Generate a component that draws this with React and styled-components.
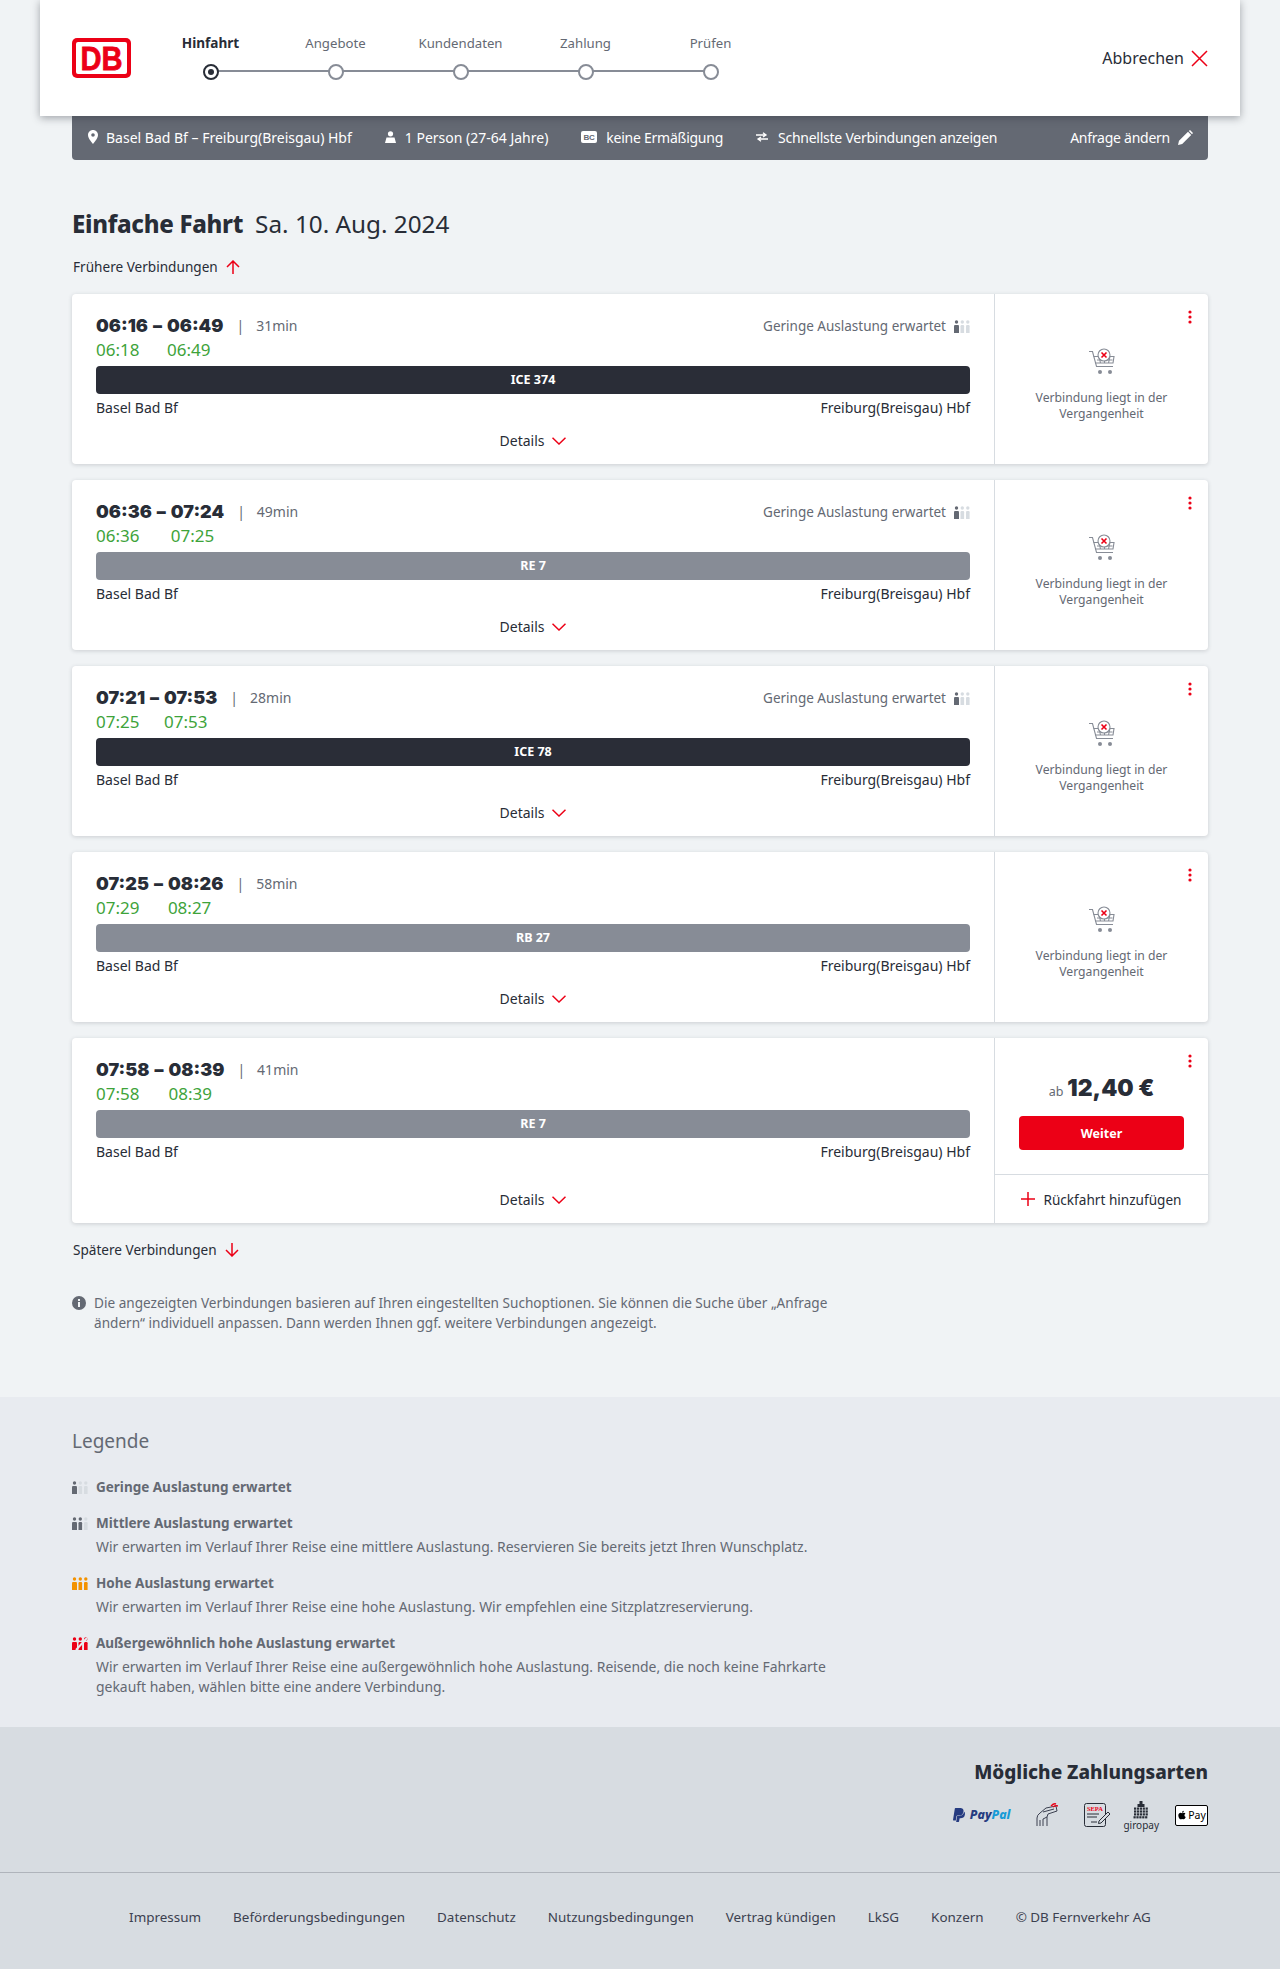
import React from 'react';
import styled, { createGlobalStyle } from 'styled-components';
import { FaApple, FaPaypal } from 'react-icons/fa';

const GlobalStyle = createGlobalStyle`
  html, body { margin: 0; padding: 0; background: #f0f3f5; }
  body { font-family: "Noto Sans", "Liberation Sans", sans-serif; color: #282d37; font-size: 14px; }
  * { box-sizing: border-box; }
`;

const connections = [
  { dep: '06:16', arr: '06:49', dur: '31min', depReal: '06:18', arrReal: '06:49', train: 'ICE 374', dark: true, load: true },
  { dep: '06:36', arr: '07:24', dur: '49min', depReal: '06:36', arrReal: '07:25', train: 'RE 7', load: true },
  { dep: '07:21', arr: '07:53', dur: '28min', depReal: '07:25', arrReal: '07:53', train: 'ICE 78', dark: true, load: true },
  { dep: '07:25', arr: '08:26', dur: '58min', depReal: '07:29', arrReal: '08:27', train: 'RB 27' },
  { dep: '07:58', arr: '08:39', dur: '41min', depReal: '07:58', arrReal: '08:39', train: 'RE 7', bookable: true },
];

const steps = ['Hinfahrt', 'Angebote', 'Kundendaten', 'Zahlung', 'Prüfen'];

const legend = [
  { level: 1, color: '#646973', title: 'Geringe Auslastung erwartet' },
  { level: 2, color: '#646973', title: 'Mittlere Auslastung erwartet', text: 'Wir erwarten im Verlauf Ihrer Reise eine mittlere Auslastung. Reservieren Sie bereits jetzt Ihren Wunschplatz.' },
  { level: 3, color: '#f39200', title: 'Hohe Auslastung erwartet', text: 'Wir erwarten im Verlauf Ihrer Reise eine hohe Auslastung. Wir empfehlen eine Sitzplatzreservierung.' },
  { level: 4, color: '#ec0016', title: 'Außergewöhnlich hohe Auslastung erwartet', text: 'Wir erwarten im Verlauf Ihrer Reise eine außergewöhnlich hohe Auslastung. Reisende, die noch keine Fahrkarte gekauft haben, wählen bitte eine andere Verbindung.' },
];

const footerLinks = ['Impressum', 'Beförderungsbedingungen', 'Datenschutz', 'Nutzungsbedingungen', 'Vertrag kündigen', 'LkSG', 'Konzern', '© DB Fernverkehr AG'];

function DbLogo() {
  return (
    <svg width="59" height="40" viewBox="0 0 59 40">
      <rect width="59" height="40" rx="5" fill="#ec0016" />
      <rect x="4" y="4" width="51" height="32" rx="2" fill="#fff" />
      <text x="29.5" y="31.5" textAnchor="middle" fill="#ec0016" stroke="#ec0016" strokeWidth="0.8" fontFamily="'Liberation Sans', sans-serif" fontWeight="700" fontSize="34" textLength="42" lengthAdjust="spacingAndGlyphs">DB</text>
    </svg>
  );
}

function LoadIcon({ level, color }) {
  const figures = [0, 6.5, 12];
  const pale = '#d7dce1';
  return (
    <svg width="16" height="13" viewBox="0 0 16 13">
      {figures.map((x, i) => {
        const on = i < level;
        const w = i === 0 ? 5 : 3.6;
        return (
          <g key={x} fill={on ? color : pale}>
            <circle cx={x + w / 2} cy="2" r="1.7" />
            <path d={`M${x} 6.2 Q${x} 5 ${x + 1} 5 H${x + w - 1} Q${x + w} 5 ${x + w} 6.2 V13 H${x} Z`} />
          </g>
        );
      })}
      {level === 4 && <path d="M4 13 L15 1" stroke="#e8ebf0" strokeWidth="2" />}
    </svg>
  );
}

function CartIcon() {
  return (
    <svg width="28" height="28" viewBox="0 0 28 28" fill="none" stroke="#878c96" strokeWidth="1.1">
      <path d="M1 3.5 H4.5 L8.5 18.5 H25" />
      <path d="M5.5 8.5 H11 M20 8.5 H26 L25 15 H7.2 M9 12 H24.5 M11 8.5 L12.5 15 M22 8.5 L20.5 15 M16.5 12 V15" />
      <circle cx="16" cy="7" r="6" fill="#fff" />
      <path d="M13.5 4.5 L18.5 9.5 M18.5 4.5 L13.5 9.5" stroke="#ec0016" strokeWidth="1.6" />
      <circle cx="12" cy="24" r="2" fill="#878c96" stroke="none" />
      <circle cx="22" cy="24" r="2" fill="#878c96" stroke="none" />
    </svg>
  );
}

function MoreDots() {
  return (
    <svg width="4" height="14" viewBox="0 0 4 14" fill="#ec0016">
      <circle cx="2" cy="2" r="1.6" />
      <circle cx="2" cy="7" r="1.6" />
      <circle cx="2" cy="12" r="1.6" />
    </svg>
  );
}

function Chevron() {
  return (
    <svg width="14" height="8" viewBox="0 0 14 8" fill="none" stroke="#ec0016" strokeWidth="1.5">
      <path d="M0.5 0.8 L7 7 L13.5 0.8" />
    </svg>
  );
}

function Arrow({ up }) {
  return (
    <svg width="14" height="14" viewBox="0 0 14 14" fill="none" stroke="#ec0016" strokeWidth="1.5">
      {up ? <path d="M7 14 V1 M1 7 L7 1 L13 7" /> : <path d="M7 0 V13 M1 7 L7 13 L13 7" />}
    </svg>
  );
}

function HandCardIcon() {
  return (
    <svg width="22" height="24" viewBox="0 0 22 24" fill="none" stroke="#3c4150" strokeWidth="1">
      <path d="M1 23 V15 Q1 12 4 10 L10 5 L20 3 L21 8 L12 11 L11 14 L7 16 V23" />
      <path d="M7 9 L18 6 M4 23 V17 M11 14 V23" />
      <path d="M15 3 Q18 0 20 1 M17 4 Q20 2 22 3" stroke="#ec0016" strokeWidth="1.4" />
    </svg>
  );
}

function SepaIcon() {
  return (
    <svg width="26" height="24" viewBox="0 0 26 24" fill="none" stroke="#282d37" strokeWidth="1">
      <rect x="0.5" y="0.5" width="21" height="23" rx="2" />
      <text x="11" y="8" textAnchor="middle" fill="#ec0016" stroke="none" fontSize="6.5" fontWeight="700" fontFamily="'Liberation Serif', serif">SEPA</text>
      <path d="M3 11 H15 M3 14 H13 M7 19 H13" />
      <path d="M15 18 L24 9 L26 11 L17 20 L14.5 20.5 Z" fill="#d7dce1" />
    </svg>
  );
}

function GiroIcon() {
  const cols = [0, 1, 2, 3, 4];
  return (
    <svg width="16" height="18" viewBox="0 0 16 18" fill="#282d37">
      <rect x="6.5" y="0" width="3" height="4" />
      <rect x="4.5" y="3" width="7" height="3" />
      {cols.map(c => [0, 1, 2, 3].map(r => (
        <rect key={`${c}-${r}`} x={1 + c * 2.9 - (r === 3 ? 0.5 : 0)} y={6.5 + r * 2.9} width="2.2" height="2.2" />
      )))}
    </svg>
  );
}

const Page = styled.div`
  width: 1280px;
`;

const Header = styled.header`
  position: relative;
  z-index: 2;
  margin: 0 40px;
  height: 116px;
  padding: 0 32px;
  background: #fff;
  box-shadow: 0 2px 8px rgba(40, 45, 55, 0.4);
  display: flex;
  align-items: center;
  justify-content: space-between;
`;

const HeaderLeft = styled.div`
  display: flex;
  align-items: center;
`;

const Stepper = styled.div`
  display: flex;
  margin-left: 17px;
  margin-top: -3px;
`;

const Step = styled.div`
  position: relative;
  width: 125px;
  display: flex;
  flex-direction: column;
  align-items: center;
  gap: 11px;
  &:not(:last-child)::after {
    content: '';
    position: absolute;
    left: 50%;
    width: 100%;
    top: 37px;
    height: 2px;
    background: #878c96;
  }
`;

const StepLabel = styled.span`
  font-size: ${p => (p.$active ? 13.6 : 13.2)}px;
  line-height: 20px;
  font-weight: ${p => (p.$active ? 700 : 400)};
  color: ${p => (p.$active ? '#282d37' : '#646973')};
`;

const StepDot = styled.span`
  position: relative;
  z-index: 1;
  width: 16px;
  height: 16px;
  border-radius: 50%;
  background: #fff;
  border: 2px solid ${p => (p.$active ? '#282d37' : '#878c96')};
  display: flex;
  align-items: center;
  justify-content: center;
  &::before {
    content: '';
    width: 6px;
    height: 6px;
    border-radius: 50%;
    background: ${p => (p.$active ? '#282d37' : 'transparent')};
  }
`;

const Cancel = styled.div`
  display: flex;
  align-items: center;
  gap: 7px;
  font-size: 16px;
  color: #282d37;
`;

const Main = styled.main`
  padding: 0 72px 64px;
`;

const SummaryBar = styled.div`
  height: 44px;
  padding: 0 15px 2px 16px;
  background: #646973;
  color: #fff;
  border-radius: 0 0 4px 4px;
  display: flex;
  align-items: center;
  gap: 33px;
  font-size: 14px;
`;

const SummaryItem = styled.div`
  display: flex;
  align-items: center;
  gap: ${p => p.$gap || 8}px;
  white-space: nowrap;
  margin-left: ${p => (p.$end ? 'auto' : '0')};
  letter-spacing: ${p => (p.$tight ? '-0.25px' : '0')};
`;

const Heading = styled.div`
  margin-top: 48px;
  display: flex;
  align-items: baseline;
  gap: 12px;
  line-height: 32px;
`;

const HeadingBold = styled.h1`
  margin: 0;
  font-size: 24px;
  font-weight: 800;
  letter-spacing: -0.3px;
`;

const HeadingDate = styled.span`
  font-size: 24.3px;
`;

const PageLink = styled.div`
  margin-top: 17px;
  margin-left: 1px;
  display: flex;
  align-items: center;
  gap: 8px;
  font-size: 13.6px;
  line-height: 20px;
`;

const Cards = styled.div`
  margin-top: 17px;
  display: flex;
  flex-direction: column;
  gap: 16px;
`;

const Card = styled.section`
  display: grid;
  grid-template-columns: 922px 214px;
  background: #fff;
  border-radius: 4px;
  box-shadow: 0 1px 4px rgba(40, 45, 55, 0.18);
`;

const CardMain = styled.div`
  padding: 22px 24px 13px;
  display: flex;
  flex-direction: column;
`;

const TopRow = styled.div`
  display: flex;
  justify-content: space-between;
  align-items: flex-start;
`;

const TimeGrid = styled.div`
  display: inline-grid;
  grid-template-columns: max-content max-content max-content max-content max-content;
  align-items: center;
`;

const TimeBold = styled.span`
  font-family: Inter, "Noto Sans", sans-serif;
  font-size: 18px;
  font-weight: 900;
  line-height: 20px;
`;

const TimeDash = styled(TimeBold)`
  padding: 0 5px;
`;

const Pipe = styled.span`
  color: #646973;
  font-size: 14px;
  line-height: 20px;
  padding: 0 12px 0 13px;
`;

const Duration = styled.span`
  color: #646973;
  font-size: 14px;
  line-height: 20px;
`;

const TimeReal = styled.span`
  grid-row: 2;
  grid-column: ${p => p.$col};
  margin-top: 2px;
  color: #3ea33a;
  font-size: 17px;
  line-height: 24px;
`;

const LoadNote = styled.div`
  display: flex;
  align-items: center;
  gap: 8px;
  color: #646973;
  font-size: 13.5px;
  line-height: 20px;
`;

const TrainBar = styled.div`
  margin-top: 4px;
  height: 28px;
  padding-bottom: 2px;
  border-radius: 4px;
  background: ${p => (p.$dark ? '#2a2d37' : '#878c96')};
  color: #fff;
  font-size: 12.5px;
  font-weight: 700;
  display: flex;
  align-items: center;
  justify-content: center;
`;

const Stations = styled.div`
  margin-top: 4px;
  display: flex;
  justify-content: space-between;
  font-size: 14px;
  line-height: 20px;
`;

const DetailsRow = styled.div`
  margin-top: auto;
  padding-top: 13px;
  display: flex;
  align-items: center;
  justify-content: center;
  gap: 8px;
  font-size: 14px;
  line-height: 20px;
`;

const CardSide = styled.div`
  position: relative;
  border-left: 1px solid #d7dce1;
  display: flex;
  flex-direction: column;
`;

const MoreButton = styled.div`
  position: absolute;
  top: 16px;
  right: 16px;
  line-height: 0;
`;

const PastNote = styled.div`
  padding: 54px 24px 0;
  display: flex;
  flex-direction: column;
  align-items: center;
  gap: 14px;
  text-align: center;
  color: #646973;
  font-size: 12.2px;
`;

const PastText = styled.p`
  margin: 0;
  line-height: 16px;
`;

const Offer = styled.div`
  height: 136px;
  padding: 35px 24px 0;
`;

const Price = styled.div`
  height: 30px;
  display: flex;
  justify-content: center;
  align-items: baseline;
  gap: 4px;
  line-height: 30px;
`;

const PriceFrom = styled.span`
  color: #646973;
  font-size: 12.5px;
`;

const PriceValue = styled.span`
  font-family: Inter, "Noto Sans", sans-serif;
  font-size: 23px;
  font-weight: 900;
`;

const ContinueButton = styled.button`
  display: block;
  margin-top: 13px;
  width: 165px;
  height: 34px;
  border: 0;
  border-radius: 4px;
  background: #ec0016;
  color: #fff;
  font-family: inherit;
  font-size: 12.5px;
  font-weight: 700;
`;

const ReturnRow = styled.div`
  height: 49px;
  border-top: 1px solid #d7dce1;
  display: flex;
  align-items: center;
  justify-content: center;
  gap: 8px;
  font-size: 13.6px;
`;

const InfoBox = styled.div`
  margin-top: 33px;
  width: 790px;
  display: grid;
  grid-template-columns: 22px 1fr;
  color: #646973;
  font-size: 13.6px;
  line-height: 20px;
`;

const InfoIcon = styled.span`
  padding-top: 3px;
  line-height: 0;
`;

const LegendSection = styled.section`
  background: #e8ebf0;
  padding: 31px 72px 30px;
  color: #646973;
`;

const LegendTitle = styled.h2`
  margin: 0 0 23px;
  font-size: 19px;
  font-weight: 400;
  line-height: 26px;
`;

const LegendList = styled.div`
  display: flex;
  flex-direction: column;
  gap: 16px;
  width: 780px;
`;

const LegendItem = styled.div`
  display: grid;
  grid-template-columns: 24px 1fr;
  row-gap: 4px;
  align-items: center;
`;

const LegendName = styled.strong`
  font-size: 13.5px;
  line-height: 20px;
  font-weight: 700;
`;

const LegendText = styled.p`
  grid-column: 2;
  margin: 0;
  font-size: 13.95px;
  line-height: 20px;
`;

const IconCell = styled.span`
  line-height: 0;
`;

const PaymentSection = styled.section`
  background: #d7dce1;
  padding: 31px 72px 42px;
  border-bottom: 1px solid #afb4bb;
`;

const PaymentTitle = styled.h2`
  margin: 0;
  text-align: right;
  font-size: 19px;
  font-weight: 800;
  line-height: 28px;
`;

const PaymentRow = styled.div`
  margin-top: 14px;
  height: 30px;
  display: flex;
  justify-content: flex-end;
  align-items: center;
`;

const PaymentIcon = styled.div`
  margin-left: ${p => p.$gap}px;
  display: flex;
  flex-direction: ${p => (p.$stack ? 'column' : 'row')};
  align-items: center;
  line-height: 1;
`;

const PayPalWord = styled.span`
  margin-left: 3px;
  font-size: 12.4px;
  font-weight: 800;
  font-style: italic;
  color: #253b80;
`;

const PayPalPal = styled.span`
  color: #179bd7;
`;

const GiroWord = styled.span`
  font-size: 10px;
  color: #282d37;
  margin-top: 1px;
`;

const ApplePay = styled.div`
  width: 33px;
  height: 21px;
  background: #fff;
  border: 1px solid #000;
  border-radius: 2px;
  color: #000;
  font-size: 10.5px;
  display: flex;
  align-items: center;
  justify-content: center;
  gap: 1px;
`;

const Footer = styled.footer`
  background: #d7dce1;
  height: 96px;
  padding-bottom: 8px;
  display: flex;
  align-items: center;
  justify-content: center;
  gap: 32px;
  font-size: 13.45px;
  color: #3c4150;
`;

function ConnectionCard({ c }) {
  return (
    <Card>
      <CardMain>
        <TopRow>
          <TimeGrid>
            <TimeBold>{c.dep}</TimeBold>
            <TimeDash>–</TimeDash>
            <TimeBold>{c.arr}</TimeBold>
            <Pipe>|</Pipe>
            <Duration>{c.dur}</Duration>
            <TimeReal $col={1}>{c.depReal}</TimeReal>
            <TimeReal $col={3}>{c.arrReal}</TimeReal>
          </TimeGrid>
          {c.load && (
            <LoadNote>
              Geringe Auslastung erwartet
              <LoadIcon level={1} color="#646973" />
            </LoadNote>
          )}
        </TopRow>
        <TrainBar $dark={c.dark}>{c.train}</TrainBar>
        <Stations>
          <span>Basel Bad Bf</span>
          <span>Freiburg(Breisgau) Hbf</span>
        </Stations>
        <DetailsRow>
          Details
          <Chevron />
        </DetailsRow>
      </CardMain>
      <CardSide>
        <MoreButton><MoreDots /></MoreButton>
        {c.bookable ? (
          <>
            <Offer>
              <Price>
                <PriceFrom>ab</PriceFrom>
                <PriceValue>12,40 €</PriceValue>
              </Price>
              <ContinueButton>Weiter</ContinueButton>
            </Offer>
            <ReturnRow>
              <svg width="14" height="14" viewBox="0 0 14 14" stroke="#ec0016" strokeWidth="1.5">
                <path d="M7 0 V14 M0 7 H14" />
              </svg>
              Rückfahrt hinzufügen
            </ReturnRow>
          </>
        ) : (
          <PastNote>
            <CartIcon />
            <PastText>Verbindung liegt in der Vergangenheit</PastText>
          </PastNote>
        )}
      </CardSide>
    </Card>
  );
}

export default function App() {
  return (
    <Page>
      <GlobalStyle />
      <Header>
        <HeaderLeft>
          <DbLogo />
          <Stepper>
            {steps.map((s, i) => (
              <Step key={s}>
                <StepLabel $active={i === 0}>{s}</StepLabel>
                <StepDot $active={i === 0} />
              </Step>
            ))}
          </Stepper>
        </HeaderLeft>
        <Cancel>
          Abbrechen
          <svg width="17" height="17" viewBox="0 0 17 17" stroke="#ec0016" strokeWidth="1.5">
            <path d="M1 1 L16 16 M16 1 L1 16" />
          </svg>
        </Cancel>
      </Header>
      <Main>
        <SummaryBar>
          <SummaryItem>
            <svg width="10" height="14" viewBox="0 0 10 14" fill="#fff">
              <path fillRule="evenodd" d="M5 0 C2.2 0 0 2.2 0 5 C0 8.5 5 14 5 14 C5 14 10 8.5 10 5 C10 2.2 7.8 0 5 0 Z M5 3.2 A1.8 1.8 0 1 1 5 6.8 A1.8 1.8 0 1 1 5 3.2 Z" />
            </svg>
            Basel Bad Bf – Freiburg(Breisgau) Hbf
          </SummaryItem>
          <SummaryItem $gap={9}>
            <svg width="11" height="12" viewBox="0 0 11 12" fill="#fff">
              <circle cx="5.5" cy="2.8" r="2.6" />
              <path d="M1.5 6.5 H9.5 L11 12 H0 Z" />
            </svg>
            1 Person (27-64 Jahre)
          </SummaryItem>
          <SummaryItem $gap={9} $tight>
            <svg width="16" height="12" viewBox="0 0 16 12">
              <rect width="16" height="12" rx="2" fill="#fff" />
              <text x="8" y="9" textAnchor="middle" fontSize="8" fontWeight="700" fill="#646973" fontFamily="'Liberation Sans', sans-serif">BC</text>
            </svg>
            keine Ermäßigung
          </SummaryItem>
          <SummaryItem $gap={10} $tight>
            <svg width="12" height="10" viewBox="0 0 12 10" fill="none" stroke="#fff" strokeWidth="1.3">
              <path d="M0 3 H9 M7 0.8 L10 3 L7 5 M12 7 H3 M5 5 L2 7 L5 9.2" />
            </svg>
            Schnellste Verbindungen anzeigen
          </SummaryItem>
          <SummaryItem $end $tight>
            Anfrage ändern
            <svg width="15" height="15" viewBox="0 0 15 15" fill="#fff">
              <path d="M0 15 L1 10.8 L10 1.8 L13.2 5 L4.2 14 Z M10.8 1 L12 0 L15 3 L14 4.2 Z" />
            </svg>
          </SummaryItem>
        </SummaryBar>
        <Heading>
          <HeadingBold>Einfache Fahrt</HeadingBold>
          <HeadingDate>Sa. 10. Aug. 2024</HeadingDate>
        </Heading>
        <PageLink>
          Frühere Verbindungen
          <Arrow up />
        </PageLink>
        <Cards>
          {connections.map(c => <ConnectionCard key={c.dep} c={c} />)}
        </Cards>
        <PageLink>
          Spätere Verbindungen
          <Arrow />
        </PageLink>
        <InfoBox>
          <InfoIcon>
            <svg width="14" height="14" viewBox="0 0 14 14">
              <circle cx="7" cy="7" r="7" fill="#646973" />
              <rect x="6" y="6" width="2" height="5" fill="#f0f3f5" />
              <rect x="6" y="3" width="2" height="2" fill="#f0f3f5" />
            </svg>
          </InfoIcon>
          <span>Die angezeigten Verbindungen basieren auf Ihren eingestellten Suchoptionen. Sie können die Suche über „Anfrage ändern“ individuell anpassen. Dann werden Ihnen ggf. weitere Verbindungen angezeigt.</span>
        </InfoBox>
      </Main>
      <LegendSection>
        <LegendTitle>Legende</LegendTitle>
        <LegendList>
          {legend.map(l => (
            <LegendItem key={l.title}>
              <IconCell><LoadIcon level={l.level} color={l.color} /></IconCell>
              <LegendName>{l.title}</LegendName>
              {l.text && <LegendText>{l.text}</LegendText>}
            </LegendItem>
          ))}
        </LegendList>
      </LegendSection>
      <PaymentSection>
        <PaymentTitle>Mögliche Zahlungsarten</PaymentTitle>
        <PaymentRow>
          <PaymentIcon $gap={0}>
            <FaPaypal size={16} color="#253b80" />
            <PayPalWord>Pay<PayPalPal>Pal</PayPalPal></PayPalWord>
          </PaymentIcon>
          <PaymentIcon $gap={26}><HandCardIcon /></PaymentIcon>
          <PaymentIcon $gap={26}><SepaIcon /></PaymentIcon>
          <PaymentIcon $gap={13} $stack>
            <GiroIcon />
            <GiroWord>giropay</GiroWord>
          </PaymentIcon>
          <PaymentIcon $gap={16}>
            <ApplePay><FaApple size={10} />Pay</ApplePay>
          </PaymentIcon>
        </PaymentRow>
      </PaymentSection>
      <Footer>
        {footerLinks.map(f => <span key={f}>{f}</span>)}
      </Footer>
    </Page>
  );
}
